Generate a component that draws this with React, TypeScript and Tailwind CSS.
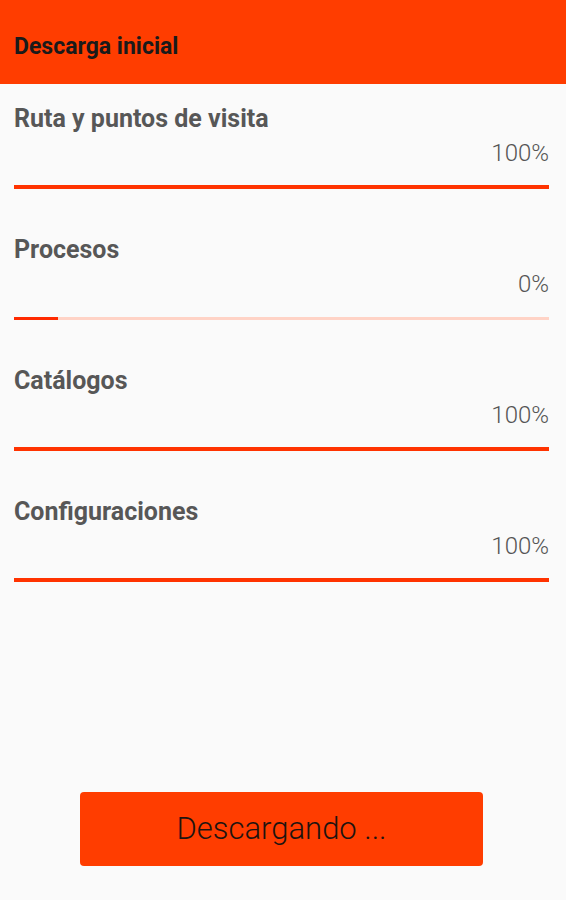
const sections = [
  { title: 'Ruta y puntos de visita', value: 100 },
  { title: 'Procesos', value: 0 },
  { title: 'Catálogos', value: 100 },
  { title: 'Configuraciones', value: 100 },
];

const App = () => {
  return (
    <div
      className="flex h-[900px] flex-col bg-[#fafafa]"
      style={{ fontFamily: 'Roboto, "Liberation Sans", sans-serif' }}
    >
      <header className="flex h-[84px] items-center bg-[#ff3d00] px-[14px]">
        <h1 className="pt-[10px] text-[23px] font-bold text-[#1a1a1a]">Descarga inicial</h1>
      </header>

      <div className="flex flex-col pl-[14px] pr-[17px]">
        {sections.map((section) => (
          <div key={section.title} className="flex h-[131px] flex-col pt-[20px]">
            <h2 className="text-[25px] font-bold leading-[30px] text-[#575757]">{section.title}</h2>
            <p className="mt-[5px] text-right text-[24px] font-light leading-[28px] text-[#555555]">
              {section.value}%
            </p>
            {section.value > 0 ? (
              <div className="mt-[18px] h-[4px] w-full bg-[#ff3300]" />
            ) : (
              <div className="mt-[18px] flex h-[4px] w-full items-center">
                <div className="h-[3px] w-full bg-[#ffd3c6]">
                  <div className="h-full w-[44px] bg-[#ff2a00]" />
                </div>
              </div>
            )}
          </div>
        ))}
      </div>

      <div className="flex-1" />

      <div className="flex justify-center pb-[34px] pr-[3px]">
        <button className="flex h-[74px] w-[403px] items-center justify-center rounded-[4px] bg-[#ff3d00] text-[31px] font-light text-[#1e1410]">
          Descargando ...
        </button>
      </div>
    </div>
  );
};

export default App;
